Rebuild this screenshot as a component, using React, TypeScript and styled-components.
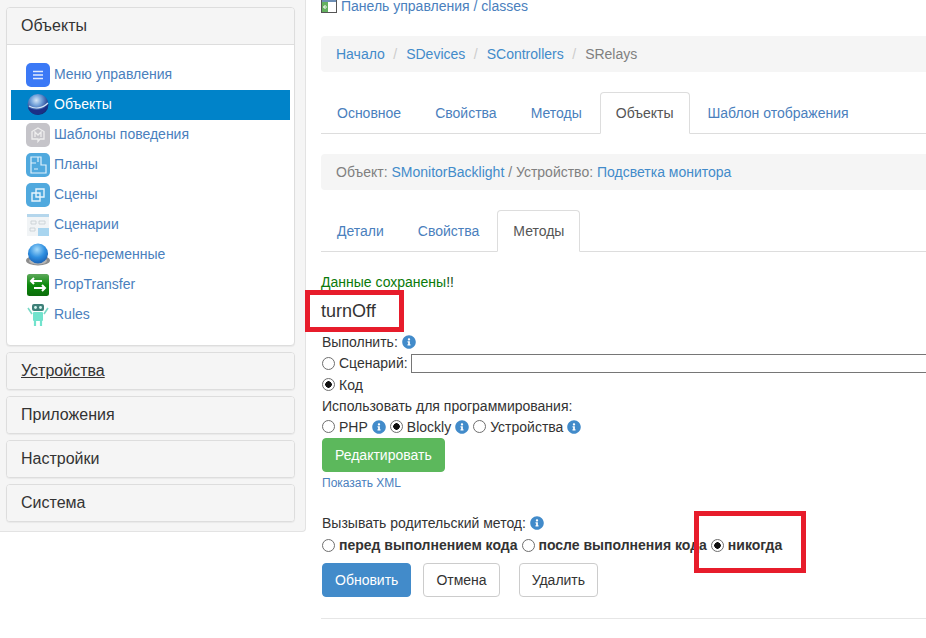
import React from "react";
import styled, { createGlobalStyle } from "styled-components";
import { FaInfoCircle } from "react-icons/fa";

const Global = createGlobalStyle`
  html, body { margin: 0; padding: 0; background: #fff; overflow: hidden; }
  body { font-family: "Liberation Sans", Arial, sans-serif; font-size: 14px; line-height: 20px; color: #333; }
  #root { height: 638px; overflow: hidden; }
`;

const Page = styled.div`
  display: flex;
  align-items: flex-start;
  width: 926px;
  height: 638px;
  position: relative;
  overflow: hidden;
`;
const Sidebar = styled.aside`
  flex: 0 0 306px;
  box-sizing: border-box;
  padding: 7px 10px 9px 6px;
  background: #f5f5f5;
  border-right: 1px solid #e3e3e3;
  border-bottom: 1px solid #e3e3e3;
  border-bottom-right-radius: 4px;
  display: flex;
  flex-direction: column;
  gap: 6px;
`;
const Panel = styled.section`
  background: #fff;
  border: 1px solid #ddd;
  border-radius: 4px;
  box-shadow: 0 1px 1px rgba(0, 0, 0, 0.05);
  overflow: hidden;
`;
const PanelHeading = styled.div<{ $open?: boolean; $current?: boolean }>`
  background: #f5f5f5;
  height: 36px;
  line-height: 36px;
  padding: 0 14px;
  font-size: 16px;
  color: #333;
  text-decoration: ${(p) => (p.$current ? "underline" : "none")};
  border-bottom: ${(p) => (p.$open ? "1px solid #ddd" : "0")};
`;
const NavList = styled.nav`
  padding: 15px 4px;
  display: flex;
  flex-direction: column;
`;
const NavItem = styled.a<{ $active?: boolean }>`
  display: flex;
  align-items: center;
  gap: 4px;
  height: 30px;
  padding-left: 15px;
  background: ${(p) => (p.$active ? "#0083c9" : "transparent")};
  color: ${(p) => (p.$active ? "#fff" : "#4a80bd")};
`;
const NavLabel = styled.span`
  padding-bottom: 2px;
`;
const IconSlot = styled.svg`
  flex: 0 0 24px;
  width: 24px;
  height: 24px;
  display: block;
`;

const Main = styled.main`
  flex: 1;
  min-width: 0;
  padding-left: 15px;
  margin-top: -4px;
`;
const TopLink = styled.div`
  display: flex;
  align-items: center;
  height: 20px;
  gap: 4px;
  margin-bottom: 20px;
  color: #4a80bd;
`;
const TopIcon = styled.svg`
  width: 16px;
  height: 14px;
  display: block;
`;
const Crumbs = styled.div`
  background: #f5f5f5;
  border-radius: 4px 0 0 4px;
  padding: 8px 15px;
  margin-bottom: 20px;
  color: #808080;
  display: flex;
`;
const CrumbLink = styled.a`
  color: #428bca;
`;
const CrumbSep = styled.span`
  color: #ccc;
  padding: 0 9px 0 8.5px;
`;
const Tabs = styled.div`
  display: flex;
  gap: 2px;
  height: 41px;
  border-bottom: 1px solid #ddd;
  margin-bottom: 20px;
`;
const Tab = styled.a<{ $active?: boolean }>`
  box-sizing: border-box;
  height: 42px;
  padding: 10px 15px;
  border: 1px solid ${(p) => (p.$active ? "#ddd" : "transparent")};
  border-bottom-color: ${(p) => (p.$active ? "#fff" : "transparent")};
  border-radius: 4px 4px 0 0;
  background: ${(p) => (p.$active ? "#fff" : "transparent")};
  color: ${(p) => (p.$active ? "#555" : "#4a80bd")};
`;
const Well = styled.div`
  background: #f5f5f5;
  border-radius: 4px 0 0 4px;
  padding: 8px 15px;
  margin-bottom: 20px;
  color: #808080;
`;
const WellLink = styled.a`
  color: #428bca;
`;
const Saved = styled.div`
  color: #0a7a0a;
  height: 20px;
`;
const SavedMark = styled.span`
  color: #164f16;
`;
const Form = styled.form`
  padding-left: 1px;
  margin: 0;
`;
const MethodTitle = styled.h3`
  margin: 9px 0 11px -1px;
  font-size: 18px;
  font-weight: 400;
  line-height: 20px;
  color: #333;
`;
const Line = styled.div<{ $h?: number; $top?: number }>`
  display: flex;
  align-items: center;
  height: ${(p) => p.$h ?? 20}px;
  margin-top: ${(p) => p.$top ?? 0}px;
  white-space: nowrap;
`;
const Radio = styled.input.attrs({ type: "radio" })`
  appearance: none;
  box-sizing: border-box;
  width: 13px;
  height: 13px;
  margin: 0 4px 0 0;
  flex: none;
  border: 1px solid #6e6e6e;
  border-radius: 50%;
  background: #fff;
  &:checked {
    background: radial-gradient(circle, #111 0 3px, #fff 3.5px);
  }
`;
const InlineRadio = styled(Radio)`
  margin-left: 4px;
`;
const Info = styled(FaInfoCircle)`
  color: #428bca;
  width: 14px;
  height: 14px;
  margin-left: 4px;
  flex: none;
`;
const ScriptInput = styled.input`
  box-sizing: border-box;
  flex: 0 0 560px;
  height: 19px;
  margin-left: 3px;
  border: 1px solid #767676;
  padding: 0 2px;
`;
const Btn = styled.button<{ $kind?: "primary" | "success"; $gap?: number; $top?: number }>`
  box-sizing: border-box;
  display: block;
  height: 34px;
  padding: 0 12px;
  margin-left: ${(p) => p.$gap ?? 0}px;
  margin-top: ${(p) => p.$top ?? 0}px;
  font: 14px/20px "Liberation Sans", Arial, sans-serif;
  border-radius: 4px;
  border: 1px solid
    ${(p) => (p.$kind === "primary" ? "#428bca" : p.$kind === "success" ? "#5cb85c" : "#ccc")};
  background: ${(p) => (p.$kind === "primary" ? "#428bca" : p.$kind === "success" ? "#5cb85c" : "#fff")};
  color: ${(p) => (p.$kind ? "#fff" : "#333")};
`;
const SmallLink = styled.a`
  display: block;
  font-size: 12px;
  line-height: 20px;
  color: #4a80bd;
  margin: 1px 0 20px;
`;
const Bold = styled.b`
  font-weight: 700;
`;
const Actions = styled.div`
  display: flex;
  margin-top: 7px;
`;
const Rule = styled.hr`
  border: 0;
  border-top: 1px solid #e6e6e6;
  margin: 21px 0 0 -1px;
`;
const Mark = styled.div<{ $x: number; $y: number; $w: number; $h: number; $t: number }>`
  position: absolute;
  box-sizing: border-box;
  left: ${(p) => p.$x}px;
  top: ${(p) => p.$y}px;
  width: ${(p) => p.$w}px;
  height: ${(p) => p.$h}px;
  border: ${(p) => p.$t}px solid #e71c2b;
`;

const Tile = ({ c, children }: { c: string; children: React.ReactNode }) => (
  <IconSlot viewBox="0 0 24 24">
    <rect width="24" height="24" rx="5" fill={c} />
    {children}
  </IconSlot>
);
const Globe = ({ id }: { id: string }) => (
  <IconSlot viewBox="0 0 24 24">
    <defs>
      <radialGradient id={id} cx="0.42" cy="0.3" r="0.75">
        <stop offset="0" stopColor="#d4e6f7" />
        <stop offset="0.35" stopColor="#6f9fd8" />
        <stop offset="0.75" stopColor="#23408f" />
        <stop offset="1" stopColor="#0d1f5e" />
      </radialGradient>
    </defs>
    <circle cx="12" cy="11.5" r="10.5" fill={`url(#${id})`} />
    <path d="M2 14c5 4 14 4 20-2-2 7-7 10-12 9.5C6 21 3 18 2 14z" fill="#1b2f86" />
    <path d="M3 13c5 3 13 3 19-3" stroke="#cfe2f5" strokeWidth="1.2" fill="none" />
  </IconSlot>
);
const GearGlobe = () => (
  <IconSlot viewBox="0 0 24 24">
    <defs>
      <radialGradient id="gg" cx="0.45" cy="0.3" r="0.8">
        <stop offset="0" stopColor="#a6dcfb" />
        <stop offset="0.5" stopColor="#2f8fe0" />
        <stop offset="1" stopColor="#1455a8" />
      </radialGradient>
    </defs>
    <ellipse cx="12" cy="17.5" rx="12" ry="5" fill="#8d8d8d" />
    <ellipse cx="12" cy="18" rx="9" ry="3.5" fill="#b5b5b5" />
    <circle cx="12" cy="10.5" r="10" fill="url(#gg)" />
  </IconSlot>
);

const items = [
  "Меню управления",
  "Объекты",
  "Шаблоны поведения",
  "Планы",
  "Сцены",
  "Сценарии",
  "Веб-переменные",
  "PropTransfer",
  "Rules",
];

const icons: React.ReactNode[] = [
  <Tile key="a" c="#3b79f6">
    <path d="M7 8.5h10M7 12h10M7 15.5h10" stroke="#fff" strokeWidth="1.4" opacity="0.85" />
  </Tile>,
  <Globe key="b" id="objg" />,
  <Tile key="c" c="#c5c4c9">
    <path d="M12 5l6 3.5V16h-4l-2 2.5V16H6V8.5z" fill="none" stroke="#eee" strokeWidth="1.3" />
    <path d="M9 14v-5l3 3 3-3v5" fill="none" stroke="#eee" strokeWidth="1.3" />
  </Tile>,
  <Tile key="d" c="#50a9de">
    <path
      d="M5 4h10v8h5v8H5zM5 10h5M12 4v5M8 16h4"
      fill="none"
      stroke="#dff1fb"
      strokeWidth="1.2"
    />
  </Tile>,
  <Tile key="e" c="#50a9de">
    <path d="M10 6h8v8h-8zM6 10h8v8H6z" fill="none" stroke="#e6f4fc" strokeWidth="1.4" />
  </Tile>,
  <IconSlot key="f" viewBox="0 0 24 24">
    <rect x="1" y="1" width="22" height="22" fill="#f1f4f6" />
    <rect x="1" y="1" width="22" height="3" fill="#b4d6ec" />
    <path d="M5 8h5v3H5zM13 8h6v3h-6zM4 15h5v3H4z" fill="none" stroke="#c6ced3" strokeWidth="0.8" />
    <rect x="12" y="15" width="11" height="8" fill="#a9d5ef" />
  </IconSlot>,
  <GearGlobe key="g" />,
  <IconSlot key="h" viewBox="0 0 24 24">
    <defs>
      <linearGradient id="pt" x1="0" y1="0" x2="0" y2="1">
        <stop offset="0" stopColor="#5ea95c" />
        <stop offset="0.5" stopColor="#0c8a0c" />
        <stop offset="1" stopColor="#0b6c0b" />
      </linearGradient>
    </defs>
    <rect x="1" y="1" width="22" height="22" rx="2.5" fill="url(#pt)" />
    <path d="M16 8H5M8 5L5 8l3 3M8 15h11M16 12l3 3-3 3" fill="none" stroke="#fff" strokeWidth="2" />
  </IconSlot>,
  <IconSlot key="i" viewBox="0 0 24 24">
    <rect x="6" y="1" width="12" height="7" rx="2" fill="#3e7f78" />
    <circle cx="9.5" cy="4.5" r="1.4" fill="#d5f5ef" />
    <circle cx="14.5" cy="4.5" r="1.4" fill="#d5f5ef" />
    <path d="M2 5l4 6M22 5l-4 6" stroke="#79d9c6" strokeWidth="1.6" />
    <rect x="7" y="9" width="10" height="9" rx="1" fill="#72e3cd" />
    <path d="M9 18v5M15 18v5" stroke="#72e3cd" strokeWidth="2.2" />
  </IconSlot>,
];

export default function App() {
  return (
    <Page>
      <Global />
      <Sidebar>
        <Panel>
          <PanelHeading $open>Объекты</PanelHeading>
          <NavList>
            {items.map((t, i) => (
              <NavItem key={t} $active={i === 1}>
                {icons[i]}
                <NavLabel>{t}</NavLabel>
              </NavItem>
            ))}
          </NavList>
        </Panel>
        <Panel>
          <PanelHeading $current>Устройства</PanelHeading>
        </Panel>
        <Panel>
          <PanelHeading>Приложения</PanelHeading>
        </Panel>
        <Panel>
          <PanelHeading>Настройки</PanelHeading>
        </Panel>
        <Panel>
          <PanelHeading>Система</PanelHeading>
        </Panel>
      </Sidebar>
      <Main>
        <TopLink>
          <TopIcon viewBox="0 0 16 14">
            <rect x="0.5" y="0.5" width="15" height="13" fill="#fff" stroke="#555" />
            <rect x="1" y="1" width="14" height="2" fill="#6d8fb5" />
            <rect x="1" y="3" width="6" height="10" fill="#63b05f" />
            <path d="M6 8H2.5M4.5 6L2.5 8l2 2" stroke="#fff" fill="none" />
          </TopIcon>
          Панель управления / classes
        </TopLink>
        <Crumbs>
          <CrumbLink>Начало</CrumbLink>
          <CrumbSep>/</CrumbSep>
          <CrumbLink>SDevices</CrumbLink>
          <CrumbSep>/</CrumbSep>
          <CrumbLink>SControllers</CrumbLink>
          <CrumbSep>/</CrumbSep>
          SRelays
        </Crumbs>
        <Tabs>
          <Tab>Основное</Tab>
          <Tab>Свойства</Tab>
          <Tab>Методы</Tab>
          <Tab $active>Объекты</Tab>
          <Tab>Шаблон отображения</Tab>
        </Tabs>
        <Well>
          Объект: <WellLink>SMonitorBacklight</WellLink> / Устройство:{" "}
          <WellLink>Подсветка монитора</WellLink>
        </Well>
        <Tabs>
          <Tab>Детали</Tab>
          <Tab>Свойства</Tab>
          <Tab $active>Методы</Tab>
        </Tabs>
        <Saved>
          Данные сохранены<SavedMark>!!</SavedMark>
        </Saved>
        <Form>
          <MethodTitle>turnOff</MethodTitle>
          <Line>
            Выполнить: <Info />
          </Line>
          <Line $h={22}>
            <Radio name="run" />
            Сценарий:
            <ScriptInput type="text" />
          </Line>
          <Line $h={21}>
            <Radio name="run" defaultChecked />
            Код
          </Line>
          <Line $top={1}>Использовать для программирования:</Line>
          <Line $h={21}>
            <Radio name="lang" />
            PHP
            <Info />
            <InlineRadio name="lang" defaultChecked />
            Blockly
            <Info />
            <InlineRadio name="lang" />
            Устройства
            <Info />
          </Line>
          <Btn type="button" $kind="success" $top={1}>
            Редактировать
          </Btn>
          <SmallLink>Показать XML</SmallLink>
          <Line>
            Вызывать родительский метод: <Info />
          </Line>
          <Line $h={22} $top={1}>
            <Radio name="parent" />
            <Bold>перед выполнением кода</Bold>
            <InlineRadio name="parent" />
            <Bold>после выполнения кода</Bold>
            <InlineRadio name="parent" defaultChecked />
            <Bold>никогда</Bold>
          </Line>
          <Actions>
            <Btn type="button" $kind="primary">
              Обновить
            </Btn>
            <Btn type="button" $gap={12}>
              Отмена
            </Btn>
            <Btn type="button" $gap={19}>
              Удалить
            </Btn>
          </Actions>
          <Rule />
        </Form>
      </Main>
      <Mark $x={305} $y={290} $w={99} $h={42} $t={5} />
      <Mark $x={694} $y={511} $w={112} $h={62} $t={5} />
    </Page>
  );
}
